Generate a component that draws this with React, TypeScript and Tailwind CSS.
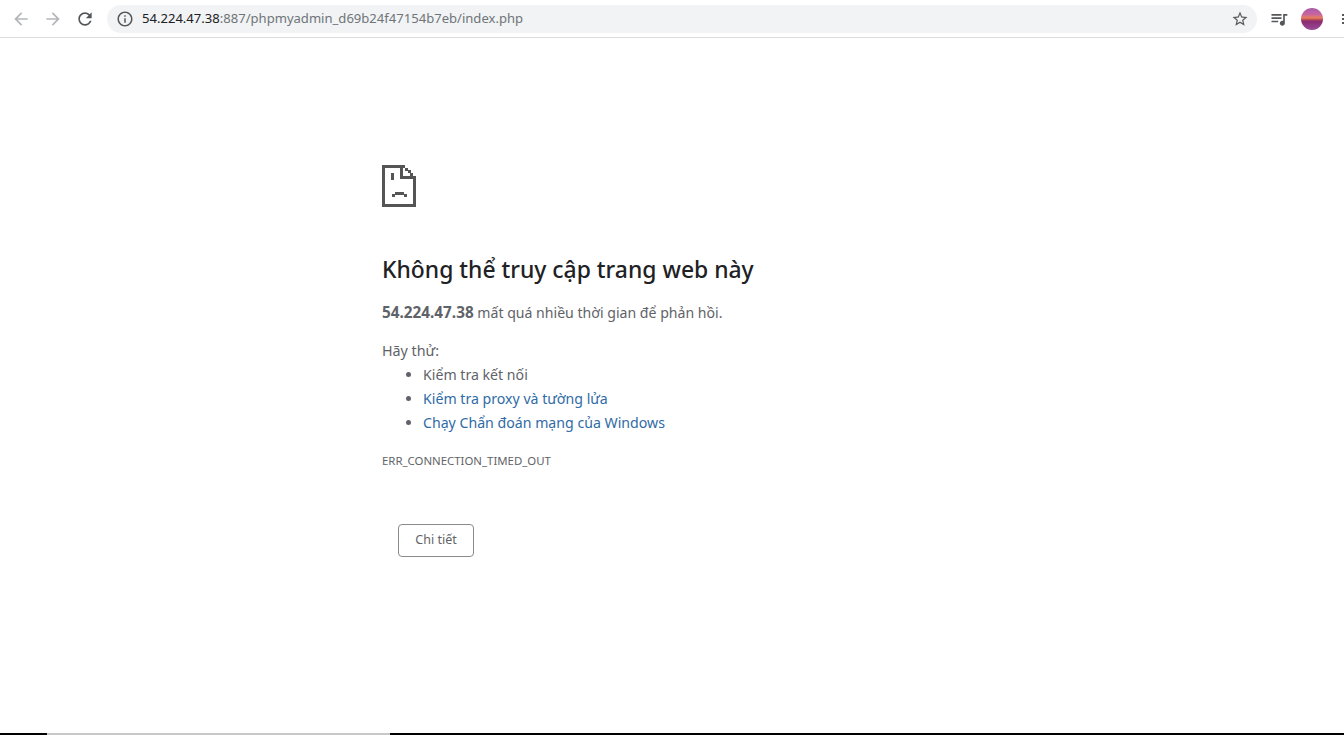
const font = { fontFamily: '"Noto Sans", "Open Sans", sans-serif' };

function MdIcon({ d, className }: { d: string; className?: string }) {
  return (
    <svg viewBox="0 0 24 24" className={className} fill="currentColor">
      <path d={d} />
    </svg>
  );
}

const ARROW_BACK = "M20 11H7.83l5.59-5.59L12 4l-8 8 8 8 1.41-1.41L7.83 13H20v-2z";
const ARROW_FORWARD = "M4 11h12.17l-5.59-5.59L12 4l8 8-8 8-1.41-1.41L16.17 13H4v-2z";
const RELOAD = "M17.65 6.35C16.2 4.9 14.21 4 12 4c-4.42 0-7.99 3.58-7.99 8s3.57 8 7.99 8c3.73 0 6.84-2.55 7.73-6h-2.08c-.82 2.33-3.04 4-5.65 4-3.31 0-6-2.69-6-6s2.69-6 6-6c1.66 0 3.14.69 4.22 1.78L13 11h7V4l-2.35 2.35z";
const INFO = "M11 7h2v2h-2zm0 4h2v6h-2zm1-9C6.48 2 2 6.48 2 12s4.48 10 10 10 10-4.48 10-10S17.52 2 12 2zm0 18c-4.41 0-8-3.59-8-8s3.59-8 8-8 8 3.59 8 8-3.59 8-8 8z";
const STAR = "M22 9.24l-7.19-.62L12 2 9.19 8.63 2 9.24l5.46 4.73L5.82 21 12 17.27 18.18 21l-1.63-7.03L22 9.24zM12 15.4l-3.76 2.27 1-4.28-3.32-2.88 4.38-.38L12 6.1l1.71 4.04 4.38.38-3.32 2.88 1 4.28L12 15.4z";
const QUEUE_MUSIC = "M15 6H3v2h12V6zm0 4H3v2h12v-2zM3 16h8v-2H3v2zM17 6v8.18c-.31-.11-.65-.18-1-.18-1.66 0-3 1.34-3 3s1.34 3 3 3 3-1.34 3-3V8h3V6h-5z";

function SadPage() {
  return (
    <svg width="34" height="42" viewBox="0 0 34 42" fill="#555" shapeRendering="crispEdges" className="block">
      <rect x="0" y="0" width="3" height="42" />
      <rect x="0" y="39" width="34" height="3" />
      <rect x="31" y="13" width="3" height="29" />
      <rect x="0" y="0" width="23" height="3" />
      <rect x="18" y="0" width="3" height="14" />
      <rect x="18" y="11" width="16" height="3" />
      <rect x="23" y="3" width="3" height="3" />
      <rect x="26" y="5" width="3" height="3" />
      <rect x="28" y="8" width="3" height="3" />
      <rect x="9" y="8" width="3" height="7" />
      <rect x="13" y="27" width="9" height="3" />
      <rect x="10" y="29" width="3" height="3" />
      <rect x="22" y="29" width="3" height="3" />
    </svg>
  );
}

function Toolbar() {
  return (
    <div className="flex h-[38px] items-center border-b border-[#dcdcdc] bg-white">
      <MdIcon d={ARROW_BACK} className="ml-[11px] h-5 w-5 text-[#b4b6b9]" />
      <MdIcon d={ARROW_FORWARD} className="ml-[12px] h-5 w-5 text-[#b4b6b9]" />
      <MdIcon d={RELOAD} className="ml-[12px] h-5 w-5 text-[#54575a]" />
      <div className="ml-[12px] flex h-[28px] w-[1150px] items-center rounded-full bg-[#f1f3f4]">
        <MdIcon d={INFO} className="ml-[9px] h-[18px] w-[18px] text-[#55585b]" />
        <span className="ml-[8px] mt-[1px] text-[13.07px] text-[#70757a]" style={font}>
          <span className="text-[#202124]">54.224.47.38</span>:887/phpmyadmin_d69b24f47154b7eb/index.php
        </span>
        <MdIcon d={STAR} className="ml-auto mr-[8px] h-[18px] w-[18px] text-[#55585b]" />
      </div>
      <MdIcon d={QUEUE_MUSIC} className="ml-[12px] h-5 w-5 text-[#55585b]" />
      <div className="ml-[12px] h-[22px] w-[22px] rounded-full bg-[linear-gradient(180deg,#a85ca8_0%,#c866a0_30%,#e8805a_45%,#c0505a_52%,#8a2d70_60%,#9a4a98_100%)]" />
      <div className="ml-[19px] flex flex-col gap-[2px]">
        <span className="h-[2px] w-[2px] bg-[#55585b]" />
        <span className="h-[2px] w-[2px] bg-[#55585b]" />
        <span className="h-[2px] w-[2px] bg-[#55585b]" />
      </div>
    </div>
  );
}

function ErrorBody() {
  return (
    <main className="flex-1 pl-[382px] pt-[127px]" style={font}>
      <SadPage />
      <h1 className="mt-[45px] text-[22.9px] font-medium leading-[36px] text-[#202124]">
        Không thể truy cập trang web này
      </h1>
      <p className="mt-[12px] text-[14.1px] leading-[24px] text-[#5f6368]">
        <b className="text-[15.3px] font-bold">54.224.47.38</b> mất quá nhiều thời gian để phản hồi.
      </p>
      <p className="mt-[14px] text-[14.3px] leading-[24px] text-[#5f6368]">Hãy thử:</p>
      <ul className="list-disc pl-[41px] text-[14.15px] leading-[24px] text-[#5f6368]">
        <li>Kiểm tra kết nối</li>
        <li><span className="text-[#2f6ba5]">Kiểm tra proxy và tường lửa</span></li>
        <li><span className="text-[#2f6ba5]">Chạy Chẩn đoán mạng của Windows</span></li>
      </ul>
      <p className="mt-[16px] text-[11.4px] leading-[20px] text-[#5f6368]">ERR_CONNECTION_TIMED_OUT</p>
      <button className="ml-4 mt-[53px] block h-[33px] w-[76px] rounded-[4px] border border-[#8a8a8a] bg-white text-[12.5px] text-[#5f6368]">
        Chi tiết
      </button>
    </main>
  );
}

export default function App() {
  return (
    <div className="flex h-[735px] w-[1344px] flex-col overflow-hidden bg-white">
      <Toolbar />
      <ErrorBody />
      <div className="flex h-[2px]">
        <div className="w-[47px] bg-black" />
        <div className="w-[343px] bg-[#c8c8c8]" />
        <div className="flex-1 bg-black" />
      </div>
    </div>
  );
}
